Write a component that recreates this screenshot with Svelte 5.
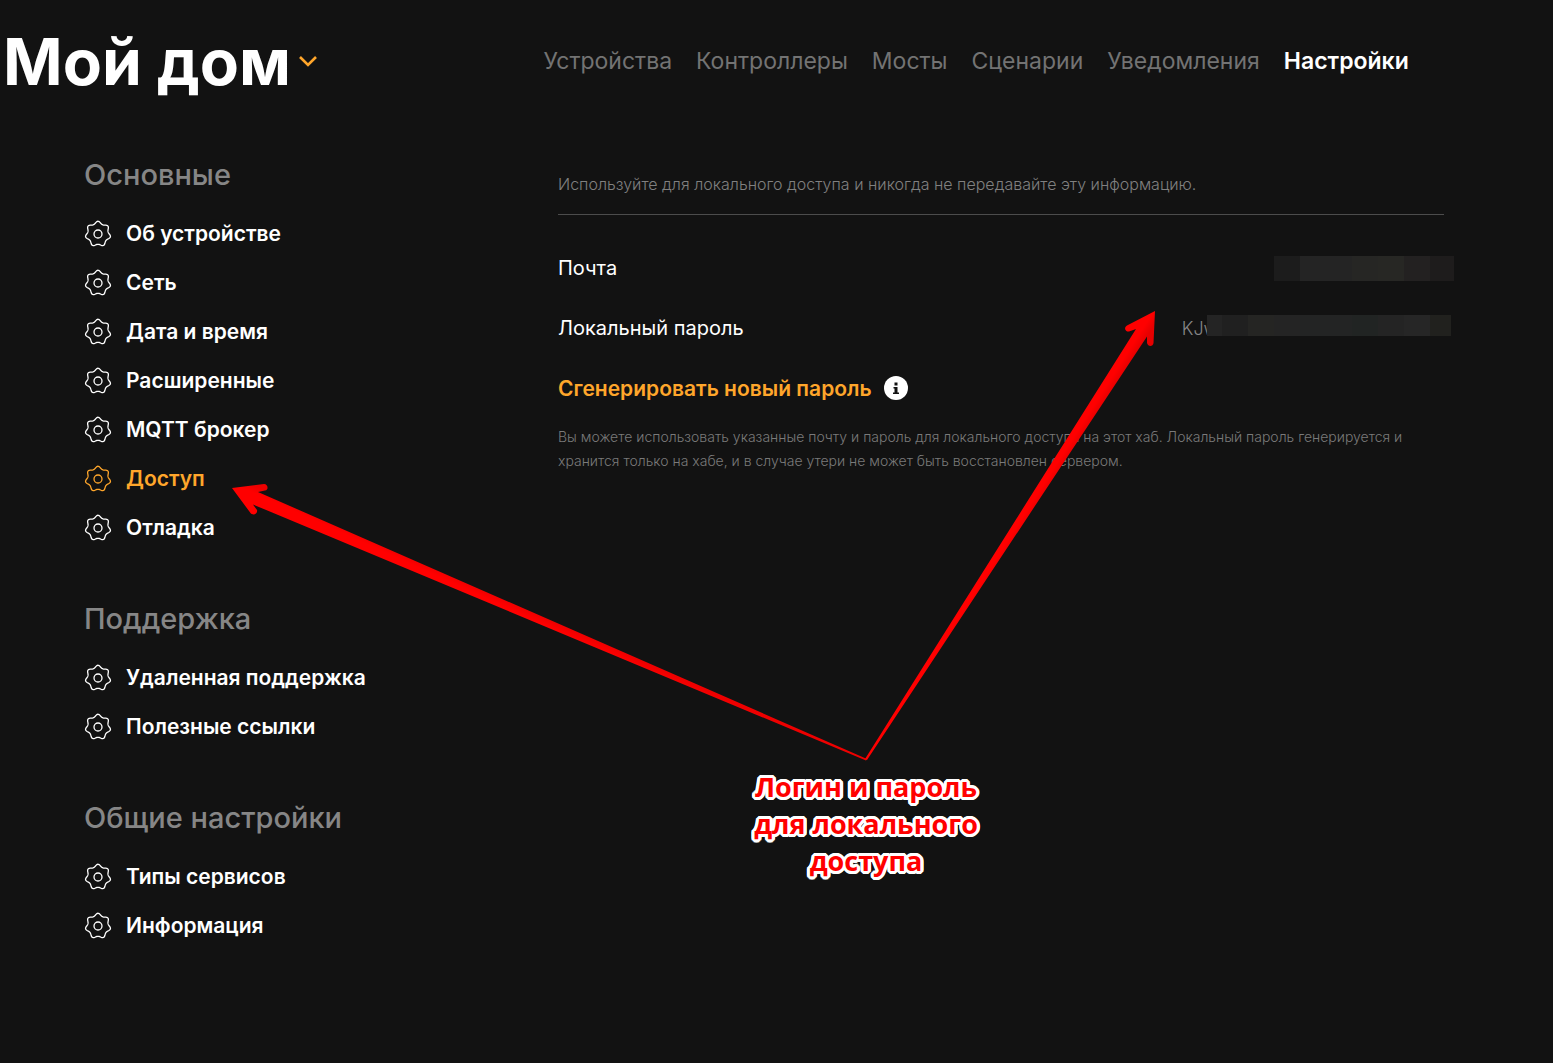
<script>
  let nav = ['Устройства', 'Контроллеры', 'Мосты', 'Сценарии', 'Уведомления', 'Настройки'];
  let currentNav = 'Настройки';
  let currentItem = 'Доступ';

  let groups = [
    {
      title: 'Основные',
      items: ['Об устройстве', 'Сеть', 'Дата и время', 'Расширенные', 'MQTT брокер', 'Доступ', 'Отладка']
    },
    { title: 'Поддержка', items: ['Удаленная поддержка', 'Полезные ссылки'] },
    { title: 'Общие настройки', items: ['Типы сервисов', 'Информация'] }
  ];

  // seven-lobed gear outline
  function gearPath() {
    const points = [];
    for (let i = 0; i <= 112; i++) {
      const a = (i / 112) * Math.PI * 2;
      const r = 11.4 + 1.2 * Math.cos(7 * a) + 0.12 * Math.cos(14 * a);
      points.push(`${(14 + r * Math.sin(a)).toFixed(2)} ${(14 - r * Math.cos(a)).toFixed(2)}`);
    }
    return 'M' + points.join('L') + 'Z';
  }

  const gear = gearPath();
</script>

<div class="page">
  <header class="header">
    <button class="home">
      <span>Мой дом</span>
      <svg class="chevron" viewBox="0 0 20 12" aria-hidden="true">
        <path d="M2 2l8 8 8-8" />
      </svg>
    </button>
    <nav class="nav">
      {#each nav as name}
        <a href="#top" class:active={name === currentNav}>{name}</a>
      {/each}
    </nav>
  </header>

  <div class="content">
    <aside class="sidebar">
      {#each groups as group}
        <section class="group">
          <h2>{group.title}</h2>
          {#each group.items as item}
            <a href="#item" class="item" class:selected={item === currentItem}>
              <svg class="gear" viewBox="0 0 28 28" aria-hidden="true">
                <path d={gear} />
                <circle cx="14" cy="14" r="4" />
              </svg>
              <span>{item}</span>
            </a>
          {/each}
        </section>
      {/each}
    </aside>

    <main class="main">
      <p class="note">Используйте для локального доступа и никогда не передавайте эту информацию.</p>
      <div class="row">
        <span>Почта</span>
        <span class="value">
          <span class="mask mail"></span>
        </span>
      </div>
      <div class="row">
        <span>Локальный пароль</span>
        <span class="value">KJw<span class="mask password"></span></span>
      </div>
      <div class="row start">
        <button class="generate">Сгенерировать новый пароль</button>
        <button class="info" aria-label="Информация о пароле">
          <svg viewBox="0 0 24 24" aria-hidden="true">
            <circle cx="12" cy="12" r="12" fill="#fff" />
            <path d="M10.5 6.5h3v3h-3zM9.5 11h4v5.5h1.5v1.5h-6v-1.5h1.5v-4h-1z" fill="#121212" />
          </svg>
        </button>
      </div>
      <p class="hint">
        Вы можете использовать указанные почту и пароль для локального доступа на этот хаб. Локальный пароль генерируется и хранится только на хабе, и в случае утери не может быть восстановлен сервером.
      </p>
    </main>
  </div>

  <svg class="arrows" width="1553" height="1063" viewBox="0 0 1553 1063" aria-hidden="true">
    <defs>
      <linearGradient id="shade" gradientUnits="userSpaceOnUse" x1="1096" y1="392" x2="1107" y2="399">
        <stop offset="0.4" stop-color="#ff0000" />
        <stop offset="1" stop-color="#e60000" />
      </linearGradient>
      <linearGradient id="shadeLeft" gradientUnits="userSpaceOnUse" x1="348" y1="541" x2="353" y2="530">
        <stop offset="0.4" stop-color="#ff0000" />
        <stop offset="1" stop-color="#ee0000" />
      </linearGradient>
    </defs>
    <path
      fill="url(#shadeLeft)"
      d="M232 488L264 484C268 484 269 490 265 490.500L258 492L867 759L866 760.500L253 504.500L257 510C258 514 253 516 250.500 513Z"
    />
    <path
      fill="url(#shade)"
      d="M1155 311L1127 325.500C1123 328 1126 332 1129 331.500L1136 329L865 759L867 760L1147 336.500L1147 343C1148 347 1153 347 1153.500 343Z"
    />
  </svg>
  <div class="callout">Логин и пароль<br />для локального<br />доступа</div>
</div>

<style>
  :global(body) {
    background: #121212;
  }

  .page {
    position: relative;
    min-height: 100vh;
    box-sizing: border-box;
    overflow: hidden;
    font-family: Inter, "Liberation Sans", sans-serif;
    color: #fff;
  }

  button {
    background: none;
    border: none;
    padding: 0;
    font: inherit;
    color: inherit;
    cursor: pointer;
  }

  a {
    color: inherit;
    text-decoration: none;
  }

  .header {
    display: grid;
    grid-template-columns: 35% 1fr;
    align-items: center;
    height: 122px;
  }

  .home {
    display: flex;
    align-items: center;
    gap: 7px;
    padding-left: 3px;
    font-size: 64px;
    font-weight: 700;
    white-space: nowrap;
  }

  .chevron {
    width: 20px;
    height: 12px;
    fill: none;
    stroke: #ffa62b;
    stroke-width: 2.6;
  }

  .nav {
    display: flex;
    gap: 24px;
    font-size: 23px;
    color: #737373;
    white-space: nowrap;
  }

  .nav .active {
    color: #fff;
    font-weight: 600;
  }

  .content {
    display: grid;
    grid-template-columns: 474px 1fr;
    padding: 33px 7% 0 84px;
  }

  .group {
    margin-bottom: 47px;
  }

  .group h2 {
    margin: 0 0 14px;
    font-size: 29px;
    line-height: 40px;
    font-weight: 500;
    color: #868686;
  }

  .item {
    display: flex;
    align-items: center;
    gap: 14px;
    height: 49px;
    font-size: 21px;
    font-weight: 600;
  }

  .item.selected {
    color: #ffa62b;
  }

  .gear {
    width: 28px;
    height: 28px;
    fill: none;
    stroke: currentColor;
    stroke-width: 1.3;
  }

  .note {
    margin: 0 0 23px;
    padding: 16px 0 17px;
    border-bottom: 1px solid #4c4c4c;
    font-size: 16px;
    line-height: 26px;
    font-weight: 300;
    color: #808080;
  }

  .row {
    display: flex;
    align-items: center;
    justify-content: space-between;
    height: 60px;
    font-size: 20px;
  }

  .row.start {
    justify-content: flex-start;
    gap: 12px;
    font-size: 21px;
  }

  .value {
    display: flex;
    align-items: center;
    margin-right: -10px;
    font-size: 18px;
    font-weight: 300;
    color: #868686;
  }

  .mask.mail {
    width: 180px;
    height: 25px;
    background: linear-gradient(90deg, #1c1c1c 26px, #242424 26px 78px, #262624 78px 104px, #272724 104px 130px, #232121 130px 156px, #1e1c1c 156px);
  }

  .mask.password {
    width: 244px;
    height: 21px;
    margin: 0 3px 6px -11px;
    background: linear-gradient(90deg, #242424 15px, #202020 15px 41px, #252523 41px 67px, #242424 67px 93px, #232424 93px 145px, #212423 145px 171px, #242424 171px 197px, #262626 197px 223px, #21211e 223px);
    z-index: 1;
  }

  .generate {
    color: #ffa62b;
    font-weight: 600;
  }

  .info {
    width: 24px;
    height: 24px;
  }

  .info svg {
    display: block;
  }

  .hint {
    margin: 7px 0 0;
    font-size: 14px;
    line-height: 24px;
    font-weight: 300;
    color: #7a7a7a;
  }

  .arrows {
    position: absolute;
    top: 0;
    left: 0;
    pointer-events: none;
  }

  .callout {
    position: absolute;
    top: 768px;
    left: 740px;
    width: 252px;
    text-align: center;
    font-family: "Open Sans", "Noto Sans", sans-serif;
    font-size: 27px;
    line-height: 37px;
    font-weight: 700;
    color: #f00;
    text-shadow:
      3px 0 #fff,
      -3px 0 #fff,
      0 3px #fff,
      0 -3px #fff,
      2px 2px #fff,
      -2px 2px #fff,
      2px -2px #fff,
      -2px -2px #fff,
      3px 1px #fff,
      -3px 1px #fff,
      3px -1px #fff,
      -3px -1px #fff,
      1px 3px #fff,
      -1px 3px #fff,
      1px -3px #fff,
      -1px -3px #fff;
  }
</style>
